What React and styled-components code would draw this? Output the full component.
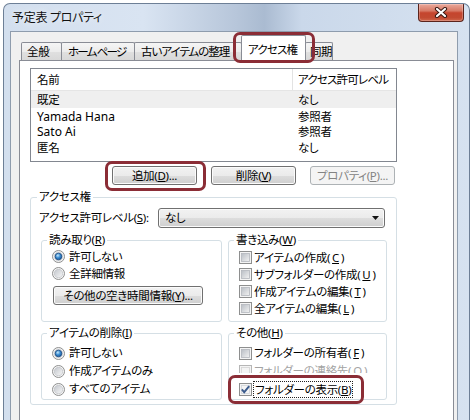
import React from "react";
import styled, { createGlobalStyle, css } from "styled-components";

const Global = createGlobalStyle`
  html, body { margin: 0; padding: 0; background: #ffffff; overflow: hidden; }
  body {
    font-family: "Noto Sans", "Noto Sans CJK JP", sans-serif;
    font-size: 11.5px;
    letter-spacing: -0.3px;
    line-height: 16px;
    color: #000;
    font-feature-settings: "palt" 1;
  }
  * { box-sizing: border-box; }
`;

const highlight = css`
  position: relative;
  &::after {
    content: "";
    position: absolute;
    top: ${(p) => p.$hl[0]}px;
    right: ${(p) => p.$hl[1]}px;
    bottom: ${(p) => p.$hl[2]}px;
    left: ${(p) => p.$hl[3]}px;
    border: 3px solid #8b2d36;
    border-radius: 7px;
    pointer-events: none;
    z-index: 5;
  }
`;

const Window = styled.div`
  margin: 3px 0 0 3px;
  width: 467px;
  height: 440px;
  border: 1px solid #6d7f96;
  border-bottom: none;
  border-radius: 7px 7px 0 0;
  background: linear-gradient(90deg, #d3dfee 0%, #d9e4f2 30%, #b7c6da 50%, #aabbd1 56%, #cad8ea 64%, #d6e2f0 100%);
  display: flex;
  flex-direction: column;
  overflow: hidden;
`;

const TitleBar = styled.div`
  height: 27px;
  flex: none;
  display: flex;
  justify-content: space-between;
  align-items: flex-start;
  padding-left: 8px;
`;

const Title = styled.div`
  line-height: 27px;
  font-size: 12px;
  color: #111;
  text-shadow: 0 0 6px rgba(255, 255, 255, 0.9);
`;

const CloseButton = styled.div`
  width: 46px;
  height: 18px;
  margin-right: 5px;
  border: 1px solid #5b241c;
  border-top: none;
  border-radius: 0 0 4px 4px;
  background: linear-gradient(#eaa99c 0%, #d77a66 40%, #c5452e 52%, #c24a31 80%, #d0674c 100%);
  box-shadow: inset 0 0 0 1px rgba(255, 255, 255, 0.25);
  display: flex;
  align-items: center;
  justify-content: center;
`;

const Client = styled.div`
  flex: 1;
  margin: 0 11px 0 6px;
  border: 1px solid #8e9cad;
  border-bottom: none;
  background: #f0f0f0;
  padding: 3px 3px 0 8px;
  display: flex;
  flex-direction: column;
`;

const TabStrip = styled.div`
  display: flex;
  align-items: flex-end;
  height: 26px;
  padding-left: 2px;
  margin-bottom: -1px;
  position: relative;
  z-index: 2;
`;

const Tab = styled.div`
  width: ${(p) => p.$w}px;
  height: ${(p) => (p.$active ? 26 : 18)}px;
  margin-left: -1px;
  margin-bottom: ${(p) => (p.$active ? 0 : 1)}px;
  border: 1px solid #898c95;
  border-bottom: none;
  border-radius: 2px 2px 0 0;
  background: ${(p) =>
    p.$active ? "#ffffff" : "linear-gradient(#f5f5f5 0%, #ececec 50%, #e0e0e0 51%, #d8d8d8 100%)"};
  padding: ${(p) => (p.$active ? "5px" : "0")} 0 0 ${(p) => p.$pl}px;
  line-height: 17px;
  letter-spacing: ${(p) => p.$ls}px;
  white-space: nowrap;
  position: relative;
  z-index: ${(p) => (p.$active ? 3 : 1)};
  &:first-child { margin-left: 0; }
  ${(p) => p.$hl && highlight}
`;

const Panel = styled.div`
  flex: 1;
  border: 1px solid #898c95;
  border-bottom: none;
  background: #ffffff;
  padding: 7px 0 0 10px;
`;

const List = styled.div`
  width: 367px;
  height: 94px;
  border: 1px solid #828790;
  background: #ffffff;
`;

const ListHeader = styled.div`
  display: grid;
  grid-template-columns: 262px 1fr;
  height: 22px;
  border-bottom: 1px solid #e5e5e5;
`;

const HeaderCell = styled.div`
  line-height: 21px;
  padding-left: ${(p) => p.$pl}px;
  letter-spacing: ${(p) => p.$ls ?? -0.3}px;
  border-right: ${(p) => (p.$divider ? "1px solid #e3e3e3" : "none")};
  white-space: nowrap;
`;

const ListRow = styled.div`
  display: grid;
  grid-template-columns: 262px 1fr;
  height: ${(p) => p.$h}px;
  align-items: center;
  background: ${(p) => (p.$selected ? "#efefef" : "transparent")};
`;

const Cell = styled.div`
  padding-left: ${(p) => p.$pl}px;
  line-height: 14px;
  white-space: nowrap;
`;

const Latin = styled.span`
  font-size: 12px;
  letter-spacing: 0;
`;

const ButtonRow = styled.div`
  width: 367px;
  margin-top: 4px;
  padding-right: 2px;
  display: flex;
  justify-content: flex-end;
  gap: 14px;
`;

const Button = styled.div`
  width: ${(p) => p.$w}px;
  height: 19px;
  margin-top: ${(p) => p.$mt || 0}px;
  margin-left: ${(p) => p.$ml || 0}px;
  border: 1px solid ${(p) => (p.$disabled ? "#adb2b5" : "#707070")};
  border-radius: 3px;
  background: ${(p) =>
    p.$disabled ? "#f4f4f4" : "linear-gradient(#f2f2f2 0%, #ebebeb 50%, #dddddd 51%, #cfcfcf 100%)"};
  box-shadow: inset 0 0 0 1px ${(p) => (p.$disabled ? "#f4f4f4" : "#fbfbfb")};
  color: ${(p) => (p.$disabled ? "#838383" : "#000")};
  display: flex;
  align-items: center;
  justify-content: center;
  line-height: 17px;
  white-space: nowrap;
  ${(p) => p.$hl && highlight}
`;

const Group = styled.div`
  border: 1px solid #d5dfe5;
  border-radius: 3px;
  padding: ${(p) => p.$pad};
  ${(p) => p.$w && `width: ${p.$w}px;`}
  ${(p) => p.$mt && `margin-top: ${p.$mt}px;`}
  min-width: 0;
`;

const GroupLabel = styled.div`
  width: fit-content;
  margin: -9px 0 0 ${(p) => p.$ml}px;
  padding: 0 2px;
  background: #ffffff;
  line-height: 16px;
  white-space: nowrap;
`;

const LevelRow = styled.div`
  margin: 3px 0 0 -2px;
  height: 20px;
  display: flex;
  align-items: center;
`;

const Dropdown = styled.div`
  width: 227px;
  height: 20px;
  margin-left: auto;
  margin-right: 2px;
  border: 1px solid #707070;
  border-radius: 3px;
  background: linear-gradient(#f2f2f2 0%, #ebebeb 50%, #dddddd 51%, #cfcfcf 100%);
  box-shadow: inset 0 0 0 1px #fbfbfb;
  display: flex;
  align-items: center;
  justify-content: space-between;
  padding: 0 5px 0 6px;
  line-height: 18px;
`;

const SubGrid = styled.div`
  margin-top: 12px;
  display: grid;
  grid-template-columns: 181px 159px;
  column-gap: 6px;
  row-gap: 11px;
`;

const OptionRow = styled.div`
  height: ${(p) => p.$h}px;
  margin-top: ${(p) => p.$mt || 0}px;
  display: flex;
  align-items: center;
  gap: ${(p) => p.$gap}px;
  white-space: nowrap;
  color: ${(p) => (p.$disabled ? "#a3a3a3" : "#000")};
  ${(p) => p.$hl && highlight}
`;

const ClipRow = styled.div`
  height: 11px;
  overflow: hidden;
  margin-bottom: 7px;
`;

const Focus = styled.span`
  outline: 1px dotted #222;
  outline-offset: 0;
  padding: 0 1px;
  line-height: 15px;
`;

const RadioIcon = ({ checked }) => (
  <svg width="13" height="13" viewBox="0 0 13 13" style={{ flex: "none" }}>
    <defs>
      <linearGradient id="radioBg" x1="0" y1="0" x2="1" y2="1">
        <stop offset="0" stopColor="#c2c6cc" />
        <stop offset="1" stopColor="#f8f8f8" />
      </linearGradient>
      <radialGradient id="radioSel" cx="0.4" cy="0.35" r="0.75">
        <stop offset="0" stopColor="#c6e8fc" />
        <stop offset="0.45" stopColor="#3d8fd3" />
        <stop offset="1" stopColor="#10498a" />
      </radialGradient>
    </defs>
    <circle cx="6.5" cy="6.5" r="6" fill="#f4f4f4" stroke="#8e8f8f" />
    <circle cx="6.5" cy="6.5" r="4.2" fill="url(#radioBg)" stroke="#b8bcc1" strokeWidth="0.6" />
    {checked && <circle cx="6.5" cy="6.5" r="3.3" fill="url(#radioSel)" stroke="#1c4d85" strokeWidth="0.8" />}
  </svg>
);

const CheckIcon = ({ checked, disabled }) => (
  <svg width="13" height="13" viewBox="0 0 13 13" style={{ flex: "none" }}>
    <defs>
      <linearGradient id="checkBg" x1="0" y1="0" x2="1" y2="1">
        <stop offset="0" stopColor="#b9bec5" />
        <stop offset="1" stopColor="#f3f3f3" />
      </linearGradient>
    </defs>
    <rect x="0.5" y="0.5" width="12" height="12" fill="#f4f4f4" stroke={disabled ? "#b6b6b6" : "#8e8f8f"} />
    <rect
      x="2.5"
      y="2.5"
      width="8"
      height="8"
      fill={disabled || checked ? "#f4f4f4" : "url(#checkBg)"}
      stroke={disabled ? "#d4d4d4" : checked ? "#d0d4d9" : "#b3b7bd"}
      strokeWidth="0.8"
    />
    {checked && <path d="M2.8 6.4 L5.2 9.2 L10.2 3.2" fill="none" stroke="#3b5b8d" strokeWidth="1.9" />}
  </svg>
);

const CloseX = () => (
  <svg width="14" height="11" viewBox="0 0 14 11">
    <path d="M3 2 L11 9 M11 2 L3 9" stroke="#3a1812" strokeWidth="4.2" strokeLinecap="round" />
    <path d="M3 2 L11 9 M11 2 L3 9" stroke="#ffffff" strokeWidth="2.2" strokeLinecap="round" />
  </svg>
);

const ArrowDown = () => (
  <svg width="7" height="4" viewBox="0 0 7 4">
    <path d="M0 0 H7 L3.5 4 Z" fill="#111" />
  </svg>
);

const tabs = [
  { label: "全般", w: 41, pl: 5, ls: -0.3 },
  { label: "ホーム ページ", w: 74, pl: 6, ls: -1.8 },
  { label: "古いアイテムの整理", w: 108, pl: 6, ls: -1 },
  { label: "アクセス権", w: 65, pl: 6, ls: -0.8, active: true },
  { label: "同期", w: 28, pl: 4, ls: -0.5 },
];

const rows = [
  { name: "既定", level: "なし", h: 17, selected: true },
  { name: <Latin>Yamada Hana</Latin>, key: "yh", level: "参照者", h: 17 },
  { name: <Latin>Sato Ai</Latin>, key: "sa", level: "参照者", h: 14 },
  { name: "匿名", level: "なし", h: 18 },
];

export default function App() {
  return (
    <>
      <Global />
      <Window>
        <TitleBar>
          <Title>予定表 プロパティ</Title>
          <CloseButton>
            <CloseX />
          </CloseButton>
        </TitleBar>
        <Client>
          <TabStrip>
            {tabs.map((t) => (
              <Tab
                key={t.label}
                $w={t.w}
                $pl={t.pl}
                $ls={t.ls}
                $active={t.active}
                $hl={t.active ? [-4, -10, -2, -9] : null}
              >
                {t.label}
              </Tab>
            ))}
          </TabStrip>
          <Panel>
            <List>
              <ListHeader>
                <HeaderCell $pl={6} $divider>名前</HeaderCell>
                <HeaderCell $pl={5} $ls={-0.8}>アクセス許可レベル</HeaderCell>
              </ListHeader>
              {rows.map((r) => (
                <ListRow key={r.key || r.name} $h={r.h} $selected={r.selected}>
                  <Cell $pl={6}>{r.name}</Cell>
                  <Cell $pl={5}>{r.level}</Cell>
                </ListRow>
              ))}
            </List>
            <ButtonRow>
              <Button $w={85} $hl={[-6, -10, -7, -8]}>
                追加(<u>D</u>)...
              </Button>
              <Button $w={85}>
                削除(<u>V</u>)
              </Button>
              <Button $w={85} $disabled>
                プロパティ(<u>P</u>)...
              </Button>
            </ButtonRow>

            <Group $w={367} $mt={12} $pad="0 9px 4px 10px">
              <GroupLabel $ml={-4}>アクセス権</GroupLabel>
              <LevelRow>
                <span>
                  アクセス許可レベル(<u>S</u>):
                </span>
                <Dropdown>
                  <span>なし</span>
                  <ArrowDown />
                </Dropdown>
              </LevelRow>
              <SubGrid>
                <Group $pad="0 4px 4px 10px">
                  <GroupLabel $ml={-5}>
                    読み取り(<u>R</u>)
                  </GroupLabel>
                  <OptionRow $h={17} $gap={4}>
                    <RadioIcon checked />
                    許可しない
                  </OptionRow>
                  <OptionRow $h={17} $gap={4}>
                    <RadioIcon />
                    全詳細情報
                  </OptionRow>
                  <Button $w={150} $mt={4} $ml={1}>
                    その他の空き時間情報(<u>Y</u>)...
                  </Button>
                </Group>
                <Group $pad="0 4px 4px 10px">
                  <GroupLabel $ml={-5}>
                    書き込み(<u>W</u>)
                  </GroupLabel>
                  <OptionRow $h={17} $gap={2} $mt={1}>
                    <CheckIcon />
                    アイテムの作成(<u>C</u>)
                  </OptionRow>
                  <OptionRow $h={17} $gap={2}>
                    <CheckIcon />
                    サブフォルダーの作成(<u>U</u>)
                  </OptionRow>
                  <OptionRow $h={17} $gap={2}>
                    <CheckIcon />
                    作成アイテムの編集(<u>T</u>)
                  </OptionRow>
                  <OptionRow $h={17} $gap={2}>
                    <CheckIcon />
                    全アイテムの編集(<u>L</u>)
                  </OptionRow>
                </Group>
                <Group $pad="0 4px 1px 10px">
                  <GroupLabel $ml={-5}>
                    アイテムの削除(<u>I</u>)
                  </GroupLabel>
                  <OptionRow $h={18} $gap={4} $mt={3}>
                    <RadioIcon checked />
                    許可しない
                  </OptionRow>
                  <OptionRow $h={18} $gap={4}>
                    <RadioIcon />
                    作成アイテムのみ
                  </OptionRow>
                  <OptionRow $h={18} $gap={4}>
                    <RadioIcon />
                    すべてのアイテム
                  </OptionRow>
                </Group>
                <Group $pad="0 4px 1px 10px">
                  <GroupLabel $ml={-5}>
                    その他(<u>H</u>)
                  </GroupLabel>
                  <OptionRow $h={18} $gap={2} $mt={3}>
                    <CheckIcon />
                    フォルダーの所有者(<u>F</u>)
                  </OptionRow>
                  <ClipRow>
                    <OptionRow $h={18} $gap={2} $disabled>
                      <CheckIcon disabled />
                      フォルダーの連絡先(<u>O</u>)
                    </OptionRow>
                  </ClipRow>
                  <OptionRow $h={18} $gap={2} $hl={[-5, 18, -6, -11]}>
                    <CheckIcon checked />
                    <Focus>
                      フォルダーの表示(<u>B</u>)
                    </Focus>
                  </OptionRow>
                </Group>
              </SubGrid>
            </Group>
          </Panel>
        </Client>
      </Window>
    </>
  );
}
